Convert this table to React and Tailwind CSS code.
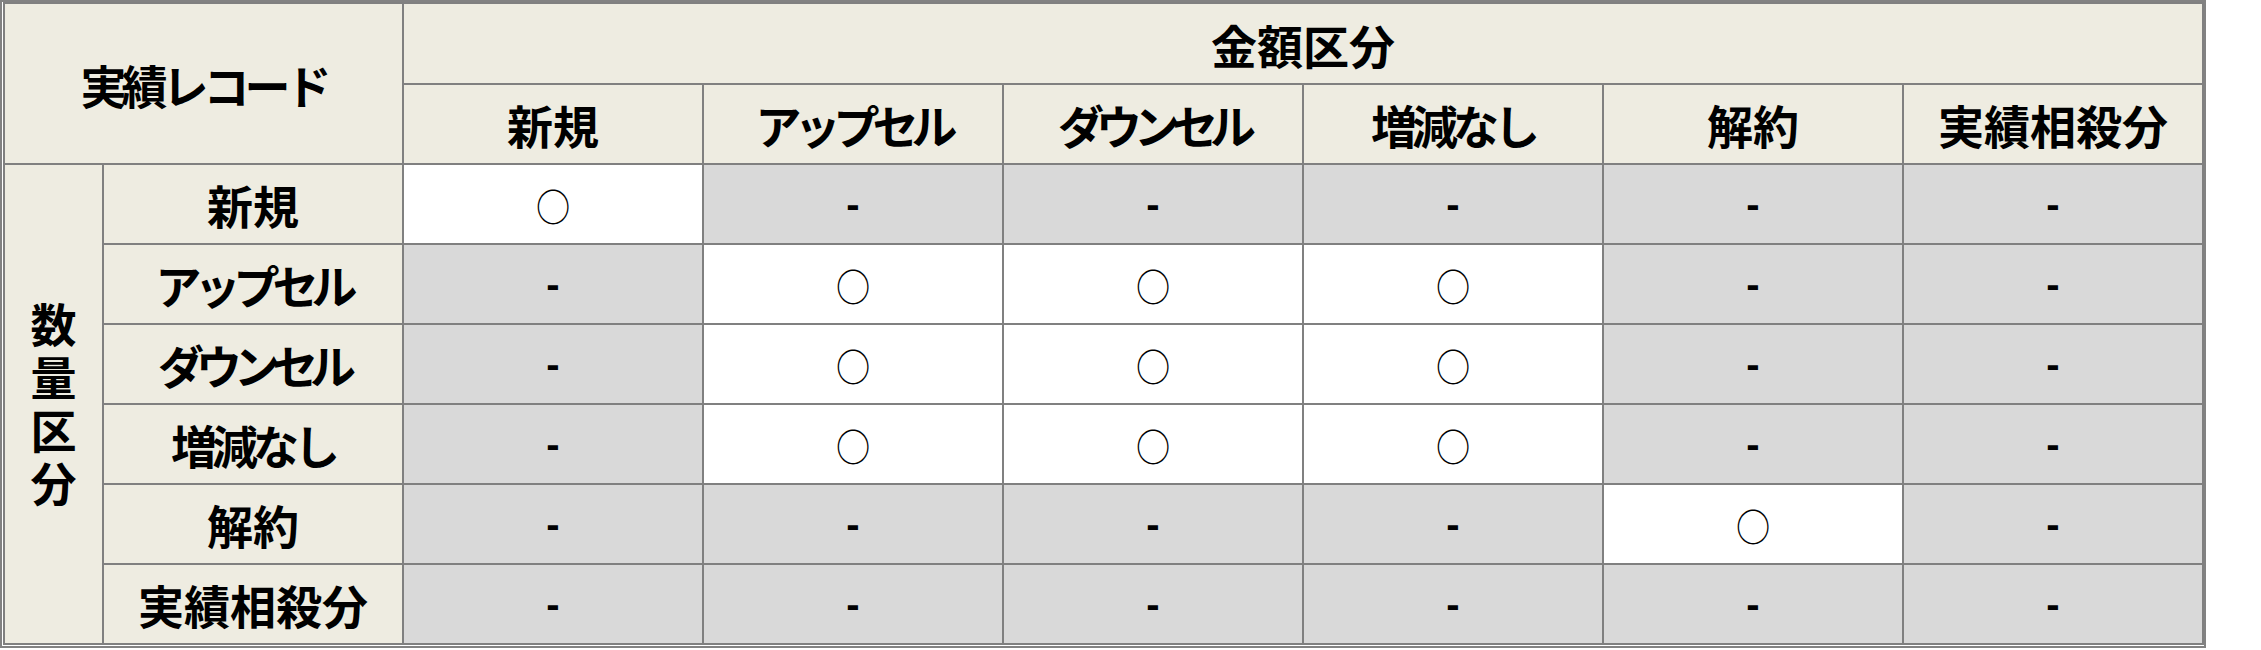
import React from "react";

// tracking per label so kana-heavy labels stay as narrow as the reference
const cols = [
  { t: "新規", k: "" },
  { t: "アップセル", k: "tracking-[-7px]" },
  { t: "ダウンセル", k: "tracking-[-8px]" },
  { t: "増減なし", k: "tracking-[-5px]" },
  { t: "解約", k: "" },
  { t: "実績相殺分", k: "" },
];

const rows = [
  { t: "新規", k: "", marks: [1, 0, 0, 0, 0, 0] },
  { t: "アップセル", k: "tracking-[-7px]", marks: [0, 1, 1, 1, 0, 0] },
  { t: "ダウンセル", k: "tracking-[-8px]", marks: [0, 1, 1, 1, 0, 0] },
  { t: "増減なし", k: "tracking-[-5px]", marks: [0, 1, 1, 1, 0, 0] },
  { t: "解約", k: "", marks: [0, 0, 0, 0, 1, 0] },
  { t: "実績相殺分", k: "", marks: [0, 0, 0, 0, 0, 0] },
];

const head =
  "bg-[#EEECE1] flex items-center justify-center text-[46px] font-bold text-black leading-none";

const App = () => {
  return (
    <div className="min-h-screen w-full bg-white font-['Noto_Sans_CJK_JP','Noto_Sans',sans-serif]">
      <div className="w-fit border-2 border-[#828282] bg-white pl-px pb-px">
        <div className="grid grid-cols-[97px_298px_repeat(6,298px)] grid-rows-[79px_78px_repeat(6,78px)] gap-[2px] border-2 border-[#808080] bg-[#808080]">
          {/* Top-left corner */}
          <div className={`${head} col-span-2 row-span-2`}>
            <span className="tracking-[-5px]">実績レコード</span>
          </div>

          {/* Amount category */}
          <div className={`${head} col-span-6`}>金額区分</div>

          {cols.map((c) => (
            <div key={c.t} className={head}>
              <span className={c.k}>{c.t}</span>
            </div>
          ))}

          {/* Quantity category */}
          <div className={`${head} row-span-6`}>
            <span className="[writing-mode:vertical-rl] tracking-[7px] pt-[7px]">
              数量区分
            </span>
          </div>

          {rows.map((r) => (
            <React.Fragment key={r.t}>
              <div className={head}>
                <span className={r.k}>{r.t}</span>
              </div>
              {r.marks.map((m, i) =>
                m ? (
                  <div
                    key={i}
                    className="bg-white flex items-center justify-center"
                  >
                    <span className="text-[38px] font-normal leading-none text-black scale-x-90 pt-[2px]">
                      ○
                    </span>
                  </div>
                ) : (
                  <div
                    key={i}
                    className="bg-[#D9D9D9] flex items-center justify-center"
                  >
                    <span className="font-['Liberation_Sans',sans-serif] text-[40px] font-bold leading-none text-black">
                      -
                    </span>
                  </div>
                )
              )}
            </React.Fragment>
          ))}
        </div>
      </div>
    </div>
  );
};

export default App;
